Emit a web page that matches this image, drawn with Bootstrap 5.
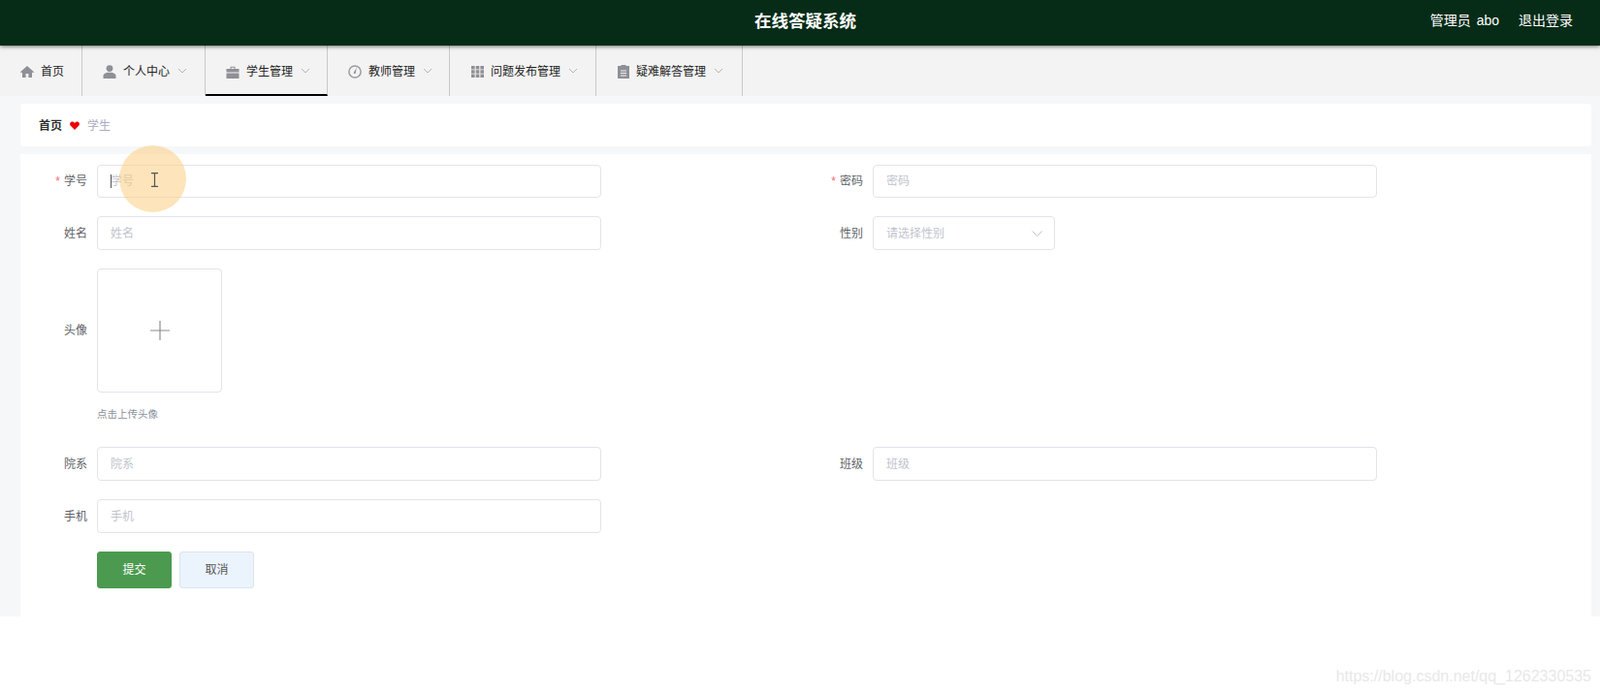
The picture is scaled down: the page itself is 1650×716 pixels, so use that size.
<!DOCTYPE html>
<html lang="zh-CN">
<head>
    <meta charset="UTF-8">
    <meta name="viewport" content="width=device-width, initial-scale=1.0">
    <title>在线答疑系统</title>
    <link href="https://cdn.jsdelivr.net/npm/bootstrap@5.3.0/dist/css/bootstrap.min.css" rel="stylesheet">
    <style>
        html, body { height: 716px; overflow: hidden; }
        body { font-family: "Liberation Sans", "Noto Sans CJK SC", sans-serif; font-size: 12px; color: #333; background: #fff; position: relative; }
        .top-bar { height: 47px; background: #062c18; color: #fff; box-shadow: 0 1px 4px rgba(0,0,0,.55); position: relative; z-index: 2; }
        .top-title { position: absolute; left: 0; right: 0; top: 10px; text-align: center; font-size: 17.5px; line-height: 24px; font-weight: 700; padding-left: 11px; }
        .top-user { font-size: 14px; line-height: 20px; padding-right: 28px; gap: 20px; margin-bottom: 5px; word-spacing: 2px; }
        .menu-bar { height: 52px; background: #f3f3f3; }
        .menu-item { height: 52px; border-right: 1px solid #c9c9c9; color: #222; font-size: 12px; padding-top: 2px; }
        .menu-item svg.ico { margin-right: 7px; flex: none; }
        .menu-item svg.arr { margin-left: 8px; margin-bottom: 2px; flex: none; }
        .menu-active { border-bottom: 2px solid #000; padding-top: 4px; }
        .m1 { width: 85px; padding-left: 21px; }
        .m2 { width: 127px; padding-left: 21px; }
        .m3 { width: 126px; padding-left: 21px; }
        .m4 { width: 126px; padding-left: 21px; }
        .m5 { width: 151px; padding-left: 22px; }
        .m6 { width: 151px; padding-left: 22px; }
        .page-body { height: 537px; background: #f6f7f9; padding: 8px 9px 0 21px; }
        .crumb-box { height: 44px; background: #fff; border-radius: 3px; padding: 1px 0 0 19px; margin-bottom: 8px; }
        .crumb-home { font-weight: 700; color: #303133; }
        .crumb-now { color: #a8acc0; }
        .form-box { height: 477px; background: #fff; padding-top: 11px; }
        .form-line { margin-bottom: 19px; }
        .form-cell { width: 800px; }
        .cell-label { width: 79px; padding-right: 10px; text-align: right; color: #606266; font-size: 12px; flex: none; }
        .req { color: #f56c6c; margin-right: 4px; }
        .text-box { width: 520px; height: 35px; border: 1px solid #e2e4ea; border-radius: 4px; padding: 0 13px; font-size: 12px; color: #303133; background: #fff; outline: 0; font-family: inherit; }
        .line-short .text-box { height: 34px; }
        .text-box::placeholder { color: #c0c4cc; opacity: 1; }
        .select-box { width: 188px; height: 35px; border: 1px solid #e2e4ea; border-radius: 4px; padding: 0 12px 0 13px; color: #c0c4cc; }
        .upload-box { width: 129px; height: 128px; border: 1px solid #e2e4ea; border-radius: 4px; }
        .upload-tip { margin: 15px 0 0 79px; font-size: 10.500px; line-height: 14px; color: #8a8f99; height: 41px; }
        .btn-submit { width: 77px; height: 38px; background: #4b9a50; border: 1px solid #4b9a50; color: #fff; font-size: 12px; border-radius: 3px; padding: 0; }
        .btn-cancel { width: 77px; height: 38px; background: #ebf4fd; border: 1px solid #dbe4ef; color: #555; font-size: 12px; border-radius: 3px; padding: 0; margin-left: 8px; }
        .btn-line { padding-left: 79px; }
        .click-spot { position: absolute; left: 123px; top: 150px; width: 69px; height: 69px; border-radius: 50%; background: rgba(252,205,130,.55); pointer-events: none; }
        .text-caret { position: absolute; left: 114px; top: 180px; width: 1px; height: 14px; background: #555; }
        .mouse-caret { position: absolute; left: 155px; top: 178px; }
        .mark-url { position: absolute; right: 9px; top: 688px; font-size: 16px; line-height: 20px; color: #e8e8e8; }
    </style>
</head>
<body>
    <div class="top-bar d-flex justify-content-end align-items-center">
        <div class="top-title">在线答疑系统</div>
        <div class="top-user d-flex align-items-center">
            <span>管理员 abo</span>
            <span>退出登录</span>
        </div>
    </div>

    <div class="menu-bar d-flex">
        <div class="menu-item m1 d-flex align-items-center">
            <svg class="ico" width="14" height="12" viewBox="0 0 14 12"><path fill="#8f8f96" d="M7 0 0 6.200l1 1 1-.8V12h3.600V8h2.800v4H12V6.400l1 .8 1-1z"/></svg>
            <span>首页</span>
        </div>
        <div class="menu-item m2 d-flex align-items-center">
            <svg class="ico" width="14" height="14" viewBox="0 0 14 14"><circle cx="7" cy="3.600" r="3.400" fill="#8f8f96"/><path fill="#8f8f96" d="M.5 14v-2.500C.5 9 3 7.800 7 7.800s6.500 1.200 6.500 3.700V14z"/></svg>
            <span>个人中心</span>
            <svg class="arr" width="10" height="6" viewBox="0 0 10 6"><path fill="none" stroke="#b4b4b8" d="M1 1l4 4 4-4"/></svg>
        </div>
        <div class="menu-item m3 menu-active d-flex align-items-center">
            <svg class="ico" width="14" height="13" viewBox="0 0 14 13"><path fill="#8f8f96" d="M4.500 3V.8h5V3h4v3.600H.5V3zm1-1.200V3h3V1.800zM.5 7.500h13V13H.5z"/></svg>
            <span>学生管理</span>
            <svg class="arr" width="10" height="6" viewBox="0 0 10 6"><path fill="none" stroke="#b4b4b8" d="M1 1l4 4 4-4"/></svg>
        </div>
        <div class="menu-item m4 d-flex align-items-center">
            <svg class="ico" width="14" height="14" viewBox="0 0 14 14"><circle cx="7" cy="7" r="6.100" fill="#f3f3f3" stroke="#9a9aa0" stroke-width="1.500"/><path fill="#8f8f96" d="M8.800 2.800 7.800 8a1 1 0 1 1-1.700-.7z"/></svg>
            <span>教师管理</span>
            <svg class="arr" width="10" height="6" viewBox="0 0 10 6"><path fill="none" stroke="#b4b4b8" d="M1 1l4 4 4-4"/></svg>
        </div>
        <div class="menu-item m5 d-flex align-items-center">
            <svg class="ico" width="13" height="12" viewBox="0 0 13 12"><path fill="#8f8f96" d="M0 0h3.600v3.600H0zm4.700 0h3.600v3.600H4.700zm4.700 0H13v3.600H9.400zM0 4.200h3.600v3.600H0zm4.700 0h3.600v3.600H4.700zm4.700 0H13v3.600H9.400zM0 8.400h3.600V12H0zm4.700 0h3.600V12H4.700zm4.700 0H13V12H9.400z"/></svg>
            <span>问题发布管理</span>
            <svg class="arr" width="10" height="6" viewBox="0 0 10 6"><path fill="none" stroke="#b4b4b8" d="M1 1l4 4 4-4"/></svg>
        </div>
        <div class="menu-item m6 d-flex align-items-center">
            <svg class="ico" width="12" height="14" viewBox="0 0 12 14"><path fill="#8f8f96" fill-rule="evenodd" d="M3.500 1V0h5v1H12v13H0V1zM3 5.500v1h6v-1zM3 8v1h6V8zm0 2.500v1h6v-1z"/></svg>
            <span>疑难解答管理</span>
            <svg class="arr" width="10" height="6" viewBox="0 0 10 6"><path fill="none" stroke="#b4b4b8" d="M1 1l4 4 4-4"/></svg>
        </div>
    </div>

    <div class="page-body">
        <div class="crumb-box d-flex align-items-center">
            <span class="crumb-home">首页</span>
            <svg class="mx-2" width="10" height="9" viewBox="0 0 10 9"><path fill="#f00000" d="M5 9 .8 4.800C-.6 3.300.2.500 2.500.5 3.600.5 4.500 1.100 5 2 5.500 1.100 6.400.5 7.500.5c2.300 0 3.100 2.800 1.700 4.300z"/></svg>
            <span class="crumb-now">学生</span>
        </div>

        <form class="form-box">
            <div class="form-line line-short d-flex">
                <div class="form-cell d-flex align-items-center">
                    <label class="cell-label"><span class="req">*</span>学号</label>
                    <input class="text-box" type="text" placeholder="学号">
                </div>
                <div class="form-cell d-flex align-items-center">
                    <label class="cell-label"><span class="req">*</span>密码</label>
                    <input class="text-box" type="text" placeholder="密码">
                </div>
            </div>
            <div class="form-line d-flex">
                <div class="form-cell d-flex align-items-center">
                    <label class="cell-label">姓名</label>
                    <input class="text-box" type="text" placeholder="姓名">
                </div>
                <div class="form-cell d-flex align-items-center">
                    <label class="cell-label">性别</label>
                    <div class="select-box d-flex align-items-center justify-content-between">
                        <span>请选择性别</span>
                        <svg width="11" height="6" viewBox="0 0 11 6"><path fill="none" stroke="#c0c4cc" d="M.5.5l5 5 5-5"/></svg>
                    </div>
                </div>
            </div>
            <div class="d-flex align-items-center">
                <label class="cell-label">头像</label>
                <div class="upload-box d-flex align-items-center justify-content-center">
                    <svg width="20" height="20" viewBox="0 0 20 20"><path fill="none" stroke="#8c8c94" stroke-width="1.200" d="M0 10h20M10 0v20"/></svg>
                </div>
            </div>
            <div class="upload-tip">点击上传头像</div>
            <div class="form-line d-flex">
                <div class="form-cell d-flex align-items-center">
                    <label class="cell-label">院系</label>
                    <input class="text-box" type="text" placeholder="院系">
                </div>
                <div class="form-cell d-flex align-items-center">
                    <label class="cell-label">班级</label>
                    <input class="text-box" type="text" placeholder="班级">
                </div>
            </div>
            <div class="form-line d-flex">
                <div class="form-cell d-flex align-items-center">
                    <label class="cell-label">手机</label>
                    <input class="text-box" type="text" placeholder="手机">
                </div>
            </div>
            <div class="btn-line d-flex">
                <button type="button" class="btn btn-submit">提交</button>
                <button type="button" class="btn btn-cancel">取消</button>
            </div>
        </form>
    </div>

    <div class="text-caret"></div>
    <div class="click-spot"></div>
    <svg class="mouse-caret" width="9" height="15" viewBox="0 0 9 15"><path fill="none" stroke="#555" stroke-width="1.200" d="M1 .6h7M1 14.400h7M4.500.6v13.800"/></svg>
    <div class="mark-url">https://blog.csdn.net/qq_1262330535</div>
</body>
</html>
